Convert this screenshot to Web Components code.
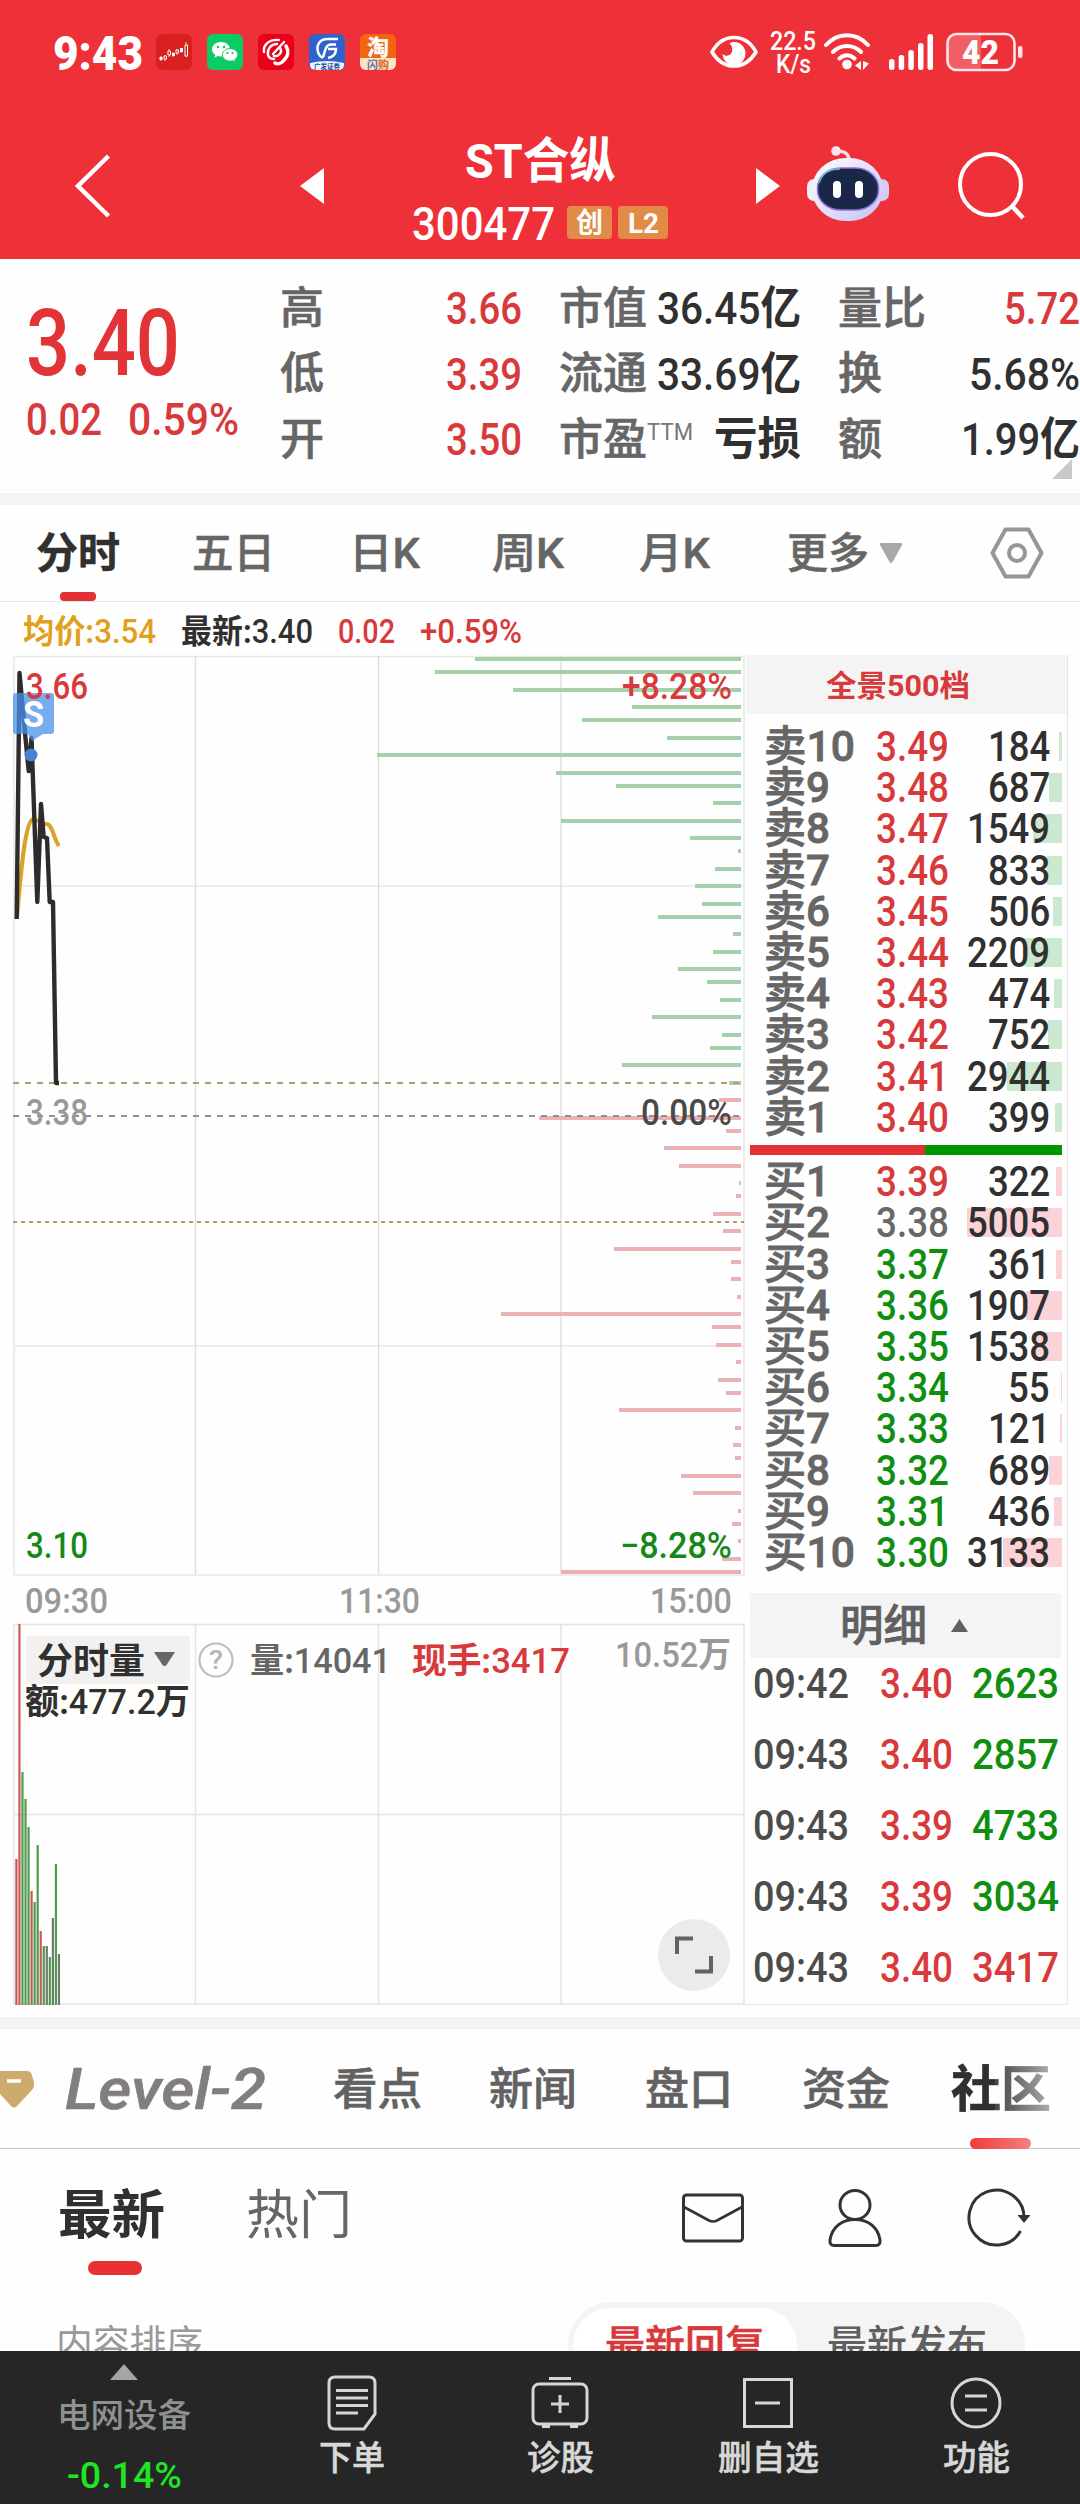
<!DOCTYPE html>
<html lang="zh-CN">
<head>
<meta charset="utf-8">
<meta name="viewport" content="width=1080">
<title>ST合纵 300477</title>
<style>
  html, body { margin: 0; padding: 0; background: #fefefe; }
  body {
    width: 1080px;
    height: 2504px;
    overflow: hidden;
    font-family: Roboto, "Noto Sans CJK SC", sans-serif;
    font-weight: 500;
    color: #323232;
  }
</style>
</head>
<body>
<stock-app></stock-app>

<script>
const RED = '#d8393b';
const GREEN = '#0f8f10';

/**
 * <fit-text w="74"> - condensed text squeezed to a given width
 * Without w it falls back to the default condensed ratio.
 */
class FitText extends HTMLElement {
  constructor() {
    super();
    this.attachShadow({ mode: 'open' });
    this.shadowRoot.innerHTML = `
      <style>
        :host { display: block; height: 1em; line-height: 1; white-space: nowrap; flex-shrink: 0; }
        span { display: inline-block; transform-origin: 0 50%; }
      </style>
      <span><slot></slot></span>
    `;
  }

  connectedCallback() {
    const span = this.shadowRoot.querySelector('span');
    const natural = span.getBoundingClientRect().width;
    const width = parseFloat(this.getAttribute('w')) || natural * 0.87;
    this.style.width = width + 'px';
    if (natural) span.style.transform = `translateY(1.2px) scaleX(${width / natural})`;
  }
}

/**
 * <ui-icon name="search"> - inline svg icons
 */
const ICONS = {
  candles: [36, 36, `<rect width="36" height="36" rx="6" fill="#d8201f"/>
    <path d="M5 22v5M9 21v6M13 15v8M17 18v5M21 15v6M25 14v5M30 8v15" stroke="#fff" stroke-width="1" opacity=".8"/>
    <path d="M3.500 23h3v3h-3zM16 19h3v3h-3zM24 14h3v4h-3z" fill="#fff"/>
    <path d="M8 22h2.500v3h-2.500zM12 17h2.500v4h-2.500zM20 16h2.500v3h-2.500zM29 11h2.500v11h-2.500z" fill="#d31f22" stroke="#fff" stroke-width="1"/>`],
  wechat: [36, 36, `<rect width="36" height="36" rx="6" fill="#0ccb64"/>
    <path d="M14 8c-5 0-9 3.200-9 7.300 0 2.300 1.300 4.200 3.300 5.500l-.9 3 3.300-1.700c1 .3 2 .4 3.300.4 5 0 9-3.100 9-7.200S19 8 14 8z" fill="#fff"/>
    <path d="M23 14.500c-4.300 0-7.600 2.800-7.600 6.300s3.300 6.300 7.600 6.300c1 0 2-.2 2.800-.4l2.800 1.400-.8-2.500c1.800-1.200 3-2.900 3-4.800 0-3.500-3.500-6.300-7.800-6.300z" fill="#fff" stroke="#0ccb64" stroke-width="1"/>
    <g fill="#0ccb64"><circle cx="11" cy="13" r="1.300"/><circle cx="17" cy="13" r="1.300"/><circle cx="20.500" cy="19" r="1.100"/><circle cx="25.500" cy="19" r="1.100"/></g>`],
  broker: [36, 36, `<rect width="36" height="36" rx="6" fill="#ea0018"/>
    <g fill="none" stroke="#fff" stroke-width="2.400" stroke-linecap="round">
    <path d="M21 6C11 5 5 11 6 18M19 10c-6 0-10 5-9 11 1 3 3 4 6 4"/>
    <path d="M28 12c3 5 2 10-1 13-3 4-7 6-10 4" stroke-width="3.500"/>
    <path d="M26 8 15 20M22 14c3 4-1 9-6 8"/></g>`],
  gf: [36, 36, `<rect width="36" height="36" rx="6" fill="#2e62cc"/>
    <path d="M1 29q17-4 34 0v2a5 5 0 0 1-5 5H6a5 5 0 0 1-5-5z" fill="#eef3fc"/>
    <g fill="none" stroke="#fff" stroke-width="2.500"><path d="M29 5H20C11 4 7 11 9 18c1 4 3 5 5 6"/><path d="M27 10.500h-5c-5 0-6 6-8 13"/><path d="M19 15h8c0 5-3 8-8 9"/></g>
    <text x="18" y="34.500" font-size="6.500" font-weight="700" text-anchor="middle" textLength="26" fill="#2b4c9c">广发证券</text>`],
  taobao: [36, 36, `<rect width="36" height="36" rx="6" fill="#f3660f"/>
    <path d="M0 24h36v6a6 6 0 0 1-6 6H6a6 6 0 0 1-6-6z" fill="#fde3c8"/>
    <text x="18" y="21" font-size="22" font-weight="900" text-anchor="middle" fill="#fff">淘</text>
    <text x="18" y="34.500" font-size="11" font-weight="700" text-anchor="middle" fill="#d8672b"><tspan fill="#6d6f9c">闪</tspan>购</text>`],
  eye: [48, 34, `<path d="M2 17C8 6 16 2.500 24 2.500S40 6 46 17c-6 10-14 14-22 14S8 27 2 17z" fill="none" stroke="#fff" stroke-width="3.600"/>
    <path d="M24 7a11.500 11.500 0 1 1-11.500 12c3 3 7 2 9-1 2-4 0-8-2-9.500C21 7.500 22 7 24 7z" fill="#fff"/>`],
  wifi: [48, 38, `<g fill="none" stroke="#fff" stroke-width="4" stroke-linecap="round">
    <path d="M2 12C14-1 32-1 44 12M9 19c8-8 20-8 28 0M15.500 25.500c4.500-4.500 10.500-4.500 15 0"/></g>
    <circle cx="23" cy="31.500" r="4.800" fill="#fff"/><path d="M37 28v9l-6-4.500zM39 28v9l6-6.500z" fill="#fff"/>`],
  signal: [46, 36, `<g fill="#fff"><rect y="25" width="5.500" height="11" rx="2.500"/><rect x="9.700" y="21" width="5.500" height="15" rx="2.500"/><rect x="19.300" y="16" width="5.500" height="20" rx="2.500"/><rect x="29" y="9" width="5.500" height="27" rx="2.500"/><rect x="38.500" width="5.500" height="36" rx="2.500"/></g>`],
  battery: [78, 40, `<path d="M11 1.500h24v37H11a9 9 0 0 1-9-9v-19a9 9 0 0 1 9-9z" fill="#fff" opacity=".22"/>
    <rect x="1.500" y="2" width="67" height="36" rx="9" fill="none" stroke="#ffe6e6" stroke-width="2.600"/>
    <rect x="72" y="14" width="4.500" height="12" rx="2" fill="#ffe6e6"/>
    <text x="34.500" y="31.500" font-size="33" font-weight="900" text-anchor="middle" textLength="37" lengthAdjust="spacingAndGlyphs" fill="#fff">42</text>`],
  back: [38, 66, `<path d="M34.500 3 4 33l30.500 30" fill="none" stroke="#fff" stroke-width="4.500"/>`],
  left: [24, 36, `<path d="M24 0v36L0 18z" fill="#fff"/>`],
  right: [24, 36, `<path d="M0 0v36l24-18z" fill="#fff"/>`],
  robot: [82, 76, `<defs><linearGradient id="h" x1="0" y1="0" x2="1" y2="1"><stop offset="0" stop-color="#fff"/><stop offset=".5" stop-color="#e2e1fa"/><stop offset="1" stop-color="#c3c0f2"/></linearGradient></defs>
    <path d="M29 5.500c8-1 13 2 13 9" fill="none" stroke="#f3d9e2" stroke-width="3.500"/><circle cx="29" cy="5" r="4.800" fill="#f8e8ee"/>
    <rect x="0" y="33" width="16" height="22" rx="7" fill="#f0ecfa"/><rect x="66" y="33" width="16" height="22" rx="7" fill="#d5cdf5"/>
    <rect x="5" y="12" width="71" height="63" rx="34" ry="31" fill="url(#h)"/>
    <rect x="10.500" y="22" width="61" height="42" rx="23" ry="20" fill="#1b2749" stroke="#8a72dd" stroke-width="1.500"/>
    <path d="M12 37C15 27 22 23 33 23" fill="none" stroke="#65bdd4" stroke-width="1.500"/>
    <rect x="26" y="35" width="8" height="17" rx="4" fill="#fff"/><rect x="48" y="35" width="8" height="17" rx="4" fill="#fff"/>`],
  search: [68, 68, `<circle cx="32.500" cy="32.500" r="30.500" fill="none" stroke="#fff" stroke-width="4"/><path d="M53.500 53.500 65 66" stroke="#fff" stroke-width="4.500"/>`],
  hexagon: [54, 52, `<path d="M15.500 2.500h23L51.500 26 38.500 49.500h-23L2.500 26z" fill="none" stroke="#969696" stroke-width="4" stroke-linejoin="round"/><circle cx="27" cy="26" r="8" fill="none" stroke="#969696" stroke-width="4"/>`],
  diamond: [34, 38, `<path d="M0 1h27q3 0 4.500 3L34 12q1 4-2 8L17 36q-3 3-6 0L0 24z" fill="#cdab6d"/><path d="M7 11h14" stroke="#fff" stroke-width="3.500"/>`],
  mail: [62, 50, `<rect x="1.500" y="2" width="59" height="46" rx="3" fill="none" stroke="#333" stroke-width="3"/><path d="M2 14 27 27.500q4 2 8 0L60 14" fill="none" stroke="#333" stroke-width="2.600"/>`],
  user: [54, 58, `<g fill="none" stroke="#333" stroke-width="3"><ellipse cx="27" cy="16" rx="15" ry="14.500"/><path d="M27 30.500C14 30.500 4 38 2 51q-.5 5.500 4 5.500h42q4.500 0 4-5.500C50 38 40 30.500 27 30.500z"/></g>`],
  refresh: [64, 60, `<path d="M53.500 43A27.500 27.500 0 1 1 57 30" fill="none" stroke="#333" stroke-width="3"/><path d="M50.500 27h13L57 35z" fill="#333"/>`],
  order: [50, 56, `<path d="M8 2h34q6 0 6 6v31L37 54H8q-6 0-6-6V8q0-6 6-6z" fill="none" stroke="#d6d6d6" stroke-width="3"/><path d="M9 15.500h32M9 23h32M9 30.500h32M9 38h22" stroke="#d6d6d6" stroke-width="2.800"/>`],
  diagnose: [58, 54, `<path d="M18 2.500h22" stroke="#d6d6d6" stroke-width="3"/><rect x="2" y="8" width="54" height="40" rx="6" fill="none" stroke="#d6d6d6" stroke-width="3"/><path d="M29 19v18M20 28h18" stroke="#d6d6d6" stroke-width="3"/><path d="M11 50h8M39 50h8" stroke="#d6d6d6" stroke-width="4"/>`],
  remove: [50, 50, `<rect x="1.500" y="1.500" width="47" height="47" fill="none" stroke="#d6d6d6" stroke-width="3"/><path d="M12 25h25" stroke="#d6d6d6" stroke-width="3"/>`],
  func: [52, 52, `<circle cx="26" cy="26" r="24" fill="none" stroke="#d6d6d6" stroke-width="3"/><path d="M15 19h22M15 33h22" stroke="#d6d6d6" stroke-width="3"/>`],
  down: [24, 20, `<path d="M2 0h20q2 0 1 2L13.500 19q-1.500 2-3 0L1 2Q0 0 2 0z" fill="#a8a8a8"/>`],
  up: [17, 13, `<path d="M0 13h17L8.500 0z" fill="#606060"/>`],
  upLight: [28, 16, `<path d="M0 16h28L14 0z" fill="#a6a6a6"/>`],
  corner: [20, 20, `<path d="M20 0v20H0z" fill="#c9c9c9"/>`]
};

class UiIcon extends HTMLElement {
  constructor() {
    super();
    this.attachShadow({ mode: 'open' });
  }

  connectedCallback() {
    const [w, h, body] = ICONS[this.getAttribute('name')];
    this.shadowRoot.innerHTML = `
      <style>
        :host { display: block; flex-shrink: 0; }
        svg { display: block; }
      </style>
      <svg width="${w}" height="${h}" viewBox="0 0 ${w} ${h}">${body}</svg>
    `;
  }
}

/**
 * <app-header> - status bar and title bar
 */
class AppHeader extends HTMLElement {
  constructor() {
    super();
    this.attachShadow({ mode: 'open' });
  }

  connectedCallback() {
    this.shadowRoot.innerHTML = `
      <style>
        :host { display: block; height: 259px; background: #ee3138; color: #fff; }
        .status { display: flex; align-items: center; height: 104px; padding: 0 56px 0 53px; box-sizing: border-box; }
        .time { font-size: 49px; font-weight: 900; margin-right: 13px; }
        .apps { display: flex; gap: 15px; flex: 1; }
        .speed { font-size: 25px; display: flex; flex-direction: column; align-items: center; margin: -3px 8px 0 12px; }
        .speed fit-text { height: 23px; }
        .nav { display: flex; align-items: center; height: 155px; padding: 8px 55px 0 74px; box-sizing: border-box; }
        .title { width: 256px; display: flex; flex-direction: column; align-items: center; margin: 10px 88px 0; }
        .name { font-size: 49px; font-weight: 700; }
        .code { display: flex; align-items: center; font-size: 46px; margin-top: 15px; }
        .badge {
          display: flex; align-items: center; justify-content: center;
          height: 33px; width: 45px; border-radius: 4px;
          background: #e08c47; font-size: 28px; font-weight: 700; margin-left: 12px;
        }
        .badge + .badge { width: 50px; margin-left: 6px; }
      </style>
      <div class="status">
        <fit-text class="time" w="90">9:43</fit-text>
        <div class="apps">
          <ui-icon name="candles"></ui-icon><ui-icon name="wechat"></ui-icon><ui-icon name="broker"></ui-icon>
          <ui-icon name="gf"></ui-icon><ui-icon name="taobao"></ui-icon>
        </div>
        <ui-icon name="eye"></ui-icon>
        <div class="speed"><fit-text w="46">22.5</fit-text><fit-text w="35">K/s</fit-text></div>
        <ui-icon name="wifi"></ui-icon>
        <ui-icon name="signal" style="margin:0 11px 0 17px"></ui-icon>
        <ui-icon name="battery"></ui-icon>
      </div>
      <div class="nav">
        <ui-icon name="back"></ui-icon>
        <ui-icon name="left" style="margin-left:188px"></ui-icon>
        <div class="title">
          <fit-text class="name" w="151">ST合纵</fit-text>
          <div class="code">
            <fit-text w="143">300477</fit-text>
            <span class="badge"><fit-text w="27">创</fit-text></span>
            <span class="badge"><fit-text w="31">L2</fit-text></span>
          </div>
        </div>
        <ui-icon name="right"></ui-icon>
        <ui-icon name="robot" style="margin:-3px 0 0 27px"></ui-icon>
        <ui-icon name="search" style="margin-left:69px"></ui-icon>
      </div>
    `;
  }
}

/**
 * <quote-summary> - last price and key figures
 */
class QuoteSummary extends HTMLElement {
  constructor() {
    super();
    this.attachShadow({ mode: 'open' });
  }

  connectedCallback() {
    const cells = [
      ['高', '3.66', 44, 76, 'r'], ['市值', '36.45<b>亿</b>', 88, 144, ''], ['量比', '5.72', 88, 76, 'r'],
      ['低', '3.39', 44, 76, 'r'], ['流通', '33.69<b>亿</b>', 88, 144, ''], ['换', '5.68%', 44, 111, ''],
      ['开', '3.50', 44, 76, 'r'], ['市盈', '<b>亏损</b>', 88, 87, ''], ['额', '1.99<b>亿</b>', 44, 119, '']
    ];
    this.shadowRoot.innerHTML = `
      <style>
        :host { display: flex; height: 234px; border-bottom: 12px solid #f4f4f4; color: ${RED}; position: relative; }
        .price { width: 280px; flex-shrink: 0; padding: 38px 0 0 26px; box-sizing: border-box; }
        .last { font-size: 92px; color: #e23336; }
        .change { display: flex; gap: 26px; font-size: 45px; margin-top: 7px; }
        .grid {
          display: grid;
          grid-template-columns: 242px 242px 242px;
          column-gap: 37px;
          grid-auto-rows: 65.500px;
          padding-top: 16px;
        }
        b { font-weight: 700; }
        .cell { display: flex; align-items: center; font-size: 45px; }
        .cell fit-text:last-child { margin-left: auto; color: #303030; }
        .cell fit-text.r:last-child { color: ${RED}; }
        .label { font-size: 44px; color: #666; -webkit-text-stroke: .6px #666; }
        .sup { font-size: 23px; color: #777; font-weight: 400; margin: -14px 0 0 0; }
        ui-icon { position: absolute; right: 8px; bottom: 14px; }
      </style>
      <div class="price">
        <fit-text class="last" w="154">3.40</fit-text>
        <div class="change"><fit-text w="76">0.02</fit-text><fit-text w="111">0.59%</fit-text></div>
      </div>
      <div class="grid">
        ${cells.map(([k, v, kw, vw, c]) => `
          <div class="cell">
            <fit-text class="label" w="${kw}">${k}</fit-text>
            ${k === '市盈' ? '<fit-text class="sup" w="46">TTM</fit-text>' : ''}
            <fit-text class="${c}" w="${vw}">${v}</fit-text>
          </div>`).join('')}
      </div>
      <ui-icon name="corner"></ui-icon>
    `;
  }
}

/**
 * <period-tabs> - chart period switch and the averages line below
 */
class PeriodTabs extends HTMLElement {
  constructor() {
    super();
    this.attachShadow({ mode: 'open' });
  }

  connectedCallback() {
    this.shadowRoot.innerHTML = `
      <style>
        :host { display: block; }
        .tabs {
          display: flex; align-items: center; height: 96px; padding-left: 36px;
          border-bottom: 1px solid #e4e4e4; font-size: 42px; color: #666; -webkit-text-stroke: .5px;
        }
        .active { color: #303030; font-weight: 700; position: relative; }
        .active::after {
          content: ""; position: absolute; left: 24px; top: 60px;
          width: 36px; height: 9px; border-radius: 4px; background: #e33035;
        }
        .info { display: flex; align-items: center; height: 53px; padding: 3px 0 0 23px; box-sizing: border-box; font-size: 33px; color: ${RED}; }
        b { font-weight: 700; }
      </style>
      <div class="tabs">
        <fit-text class="active" w="84">分时</fit-text>
        <fit-text w="83" style="margin-left:72px">五日</fit-text>
        <fit-text w="71" style="margin-left:74px">日K</fit-text>
        <fit-text w="72" style="margin-left:72px">周K</fit-text>
        <fit-text w="71" style="margin-left:75px">月K</fit-text>
        <fit-text w="82" style="margin-left:77px">更多</fit-text>
        <ui-icon name="down" style="margin-left:10px"></ui-icon>
        <ui-icon name="hexagon" style="margin-left:87px"></ui-icon>
      </div>
      <div class="info">
        <fit-text w="133" style="color:#dfa01c"><b>均价:</b>3.54</fit-text>
        <fit-text w="132" style="color:#303030;margin-left:25px"><b>最新:</b>3.40</fit-text>
        <fit-text w="57" style="margin-left:25px">0.02</fit-text>
        <fit-text w="102" style="margin-left:25px">+0.59%</fit-text>
      </div>
    `;
  }
}

// Resting orders: [y, left edge]; every bar runs to the right edge at 741
const ASKS = [
  [659, 475], [672, 435], [690, 513], [707, 632], [720, 582], [738, 667], [755, 377], [773, 556], [786, 616],
  [803, 713], [821, 561], [838, 690], [851, 738], [869, 715], [886, 695], [904, 702], [917, 658], [934, 733],
  [952, 713], [969, 678], [982, 707], [1000, 720], [1017, 652], [1035, 722], [1048, 710], [1065, 622], [1083, 729]
];
const BIDS = [
  [1100, 719], [1118, 539], [1131, 726], [1148, 664], [1166, 679], [1183, 739], [1196, 736], [1214, 713],
  [1231, 723], [1249, 614], [1262, 731], [1279, 731], [1297, 737], [1314, 501], [1327, 712], [1345, 716],
  [1362, 736], [1380, 718], [1393, 726], [1410, 619], [1428, 735], [1445, 733], [1458, 735], [1476, 681],
  [1493, 693], [1511, 738], [1524, 732], [1541, 738], [1559, 722], [1572, 561]
];

const label = (x, y, w, size, fill, text, weight = 500) =>
  `<text x="${x}" y="${y}" textLength="${w}" lengthAdjust="spacingAndGlyphs" font-size="${size}" font-weight="${weight}" fill="${fill}">${text}</text>`;

/**
 * <minute-chart> - intraday price line with order depth
 */
class MinuteChart extends HTMLElement {
  constructor() {
    super();
    this.attachShadow({ mode: 'open' });
  }

  connectedCallback() {
    const bar = ([y, x], fill) => `<rect x="${x}" y="${y - 2}" width="${741 - x}" height="4" fill="${fill}"/>`;
    this.shadowRoot.innerHTML = `
      <style>
        :host { display: block; height: 968px; }
        svg { display: block; }
      </style>
      <svg width="746" height="968" viewBox="0 655 746 968">
        <g fill="none" stroke="#e8e8e8" stroke-width="1.600">
          <path d="M14 656.500H744V1575H14zM14 886H743M14 1346H743"/>
          <path d="M195.500 656V1575M378.500 656V1575M561 656V1575" stroke="#dcdcdc" stroke-width="1.300"/>
        </g>
        ${ASKS.map(b => bar(b, '#a6d0a9')).join('')}
        ${BIDS.map(b => bar(b, '#ebb2b5')).join('')}
        <g fill="none" stroke-width="2">
          <path d="M13 1083H741" stroke="#b3a06c" stroke-dasharray="6 6"/>
          <path d="M13 1116H741" stroke="#929292" stroke-dasharray="6 6"/>
          <path d="M13 1222H744" stroke="#b89b60" stroke-dasharray="4 4"/>
        </g>
        <path d="M17 918C20 885 24 822 33 819C38 819 40 824 46 824C53 824 53 838 59 846" fill="none" stroke="#dba228" stroke-width="4"/>
        <path d="M16.700 919 19.500 673 25 733 28.700 771 31.500 738 37.300 902 41 804 43.700 837 47 838 49.700 902 53 902 56 1083 59 1083" fill="none" stroke="#2e2b2c" stroke-width="4.400" stroke-linejoin="round"/>
        <path d="M16 693H51q3 0 3 3V731q0 3-3 3H43L32 741 28 734H16q-3 0-3-3V696q0-3 3-3z" fill="#4a90ea" opacity=".75"/>
        <circle cx="31" cy="755" r="6.500" fill="#4582d2"/>
        ${label(23, 726.500, 21, 36, '#fff', 'S', 700)}
        ${label(26, 699, 62, 36, RED, '3.66')}
        ${label(622, 699, 110, 36, RED, '+8.28%')}
        ${label(26, 1124.500, 62, 36, '#999', '3.38')}
        ${label(641, 1124.500, 91, 36, '#4c4848', '0.00%')}
        ${label(26, 1558, 62, 36, '#15881a', '3.10')}
        ${label(620, 1558, 112, 36, '#15881a', '−8.28%')}
        ${label(25, 1613, 83, 35, '#999', '09:30')}
        ${label(339, 1613, 81, 35, '#999', '11:30')}
        ${label(650, 1613, 82, 35, '#999', '15:00')}
      </svg>
    `;
  }
}

/**
 * <volume-chart> - per minute volume
 */
class VolumeChart extends HTMLElement {
  constructor() {
    super();
    this.attachShadow({ mode: 'open' });
  }

  connectedCallback() {
    const r = '#c95a55', g = '#4f9a4c', d = '#6d7a6e';
    const bars = [
      [1859, r], [1624, r], [1772, g], [1799, g], [1827, g], [1891, r], [1902, g], [1845, g],
      [1931, r], [1946, g], [1946, d], [1957, g], [1918, d], [1864, g], [1954, d]
    ];
    this.shadowRoot.innerHTML = `
      <style>
        :host { display: block; height: 394px; }
        svg { display: block; }
      </style>
      <svg width="746" height="394" viewBox="0 1623 746 394">
        <g fill="none" stroke="#e4e4e4" stroke-width="1.500">
          <path d="M14 1624.500H744V2004H14zM14 1814.500H744"/>
          <path d="M195.500 1624V2004M378.500 1624V2004M561 1624V2004"/>
        </g>
        ${bars.map(([y, c], i) => `<rect x="${15.300 + i * 3.040}" y="${y}" width="2.200" height="${2005 - y}" fill="${c}"/>`).join('')}
        <rect x="26" y="1636" width="164" height="48" rx="4" fill="#f2f1f0"/>
        <rect x="26" y="1684" width="164" height="34" fill="#fffefa"/>
        ${label(37, 1674, 108, 36, '#303030', '分时量', 700)}
        <path d="M154 1652h21l-8.500 13q-2 2-4 0z" fill="#666"/>
        <circle cx="216" cy="1660" r="16.500" fill="none" stroke="#bdbdbd" stroke-width="2.200"/>
        ${label(209, 1669, 14, 25, '#b5b5b5', '?')}
        ${label(250, 1673, 141, 35, '#666', '<tspan font-weight="700">量:</tspan>14041')}
        ${label(412, 1673, 158, 35, RED, '<tspan font-weight="700">现手:</tspan>3417')}
        ${label(615, 1667, 116, 35, '#999', '10.52<tspan font-weight="700">万</tspan>')}
        ${label(25, 1714, 165, 35, '#303030', '<tspan font-weight="700">额:</tspan>477.2<tspan font-weight="700">万</tspan>')}
        <circle cx="694" cy="1955" r="36" fill="#ebebeb"/>
        <path d="M677 1954V1938.500H693M711 1956V1971.500H695" fill="none" stroke="#636363" stroke-width="4"/>
      </svg>
    `;
  }
}

/**
 * <order-book> - ten levels each side and latest trades
 */
class OrderBook extends HTMLElement {
  constructor() {
    super();
    this.attachShadow({ mode: 'open' });
  }

  connectedCallback() {
    const asks = [
      [10, '3.49', 184, 3], [9, '3.48', 687, 13], [8, '3.47', 1549, 29], [7, '3.46', 833, 15], [6, '3.45', 506, 9],
      [5, '3.44', 2209, 37], [4, '3.43', 474, 8], [3, '3.42', 752, 14], [2, '3.41', 2944, 55], [1, '3.40', 399, 7]
    ];
    const bids = [
      [1, '3.39', 322, 6], [2, '3.38', 5005, 95], [3, '3.37', 361, 6], [4, '3.36', 1907, 36], [5, '3.35', 1538, 28],
      [6, '3.34', 55, 1], [7, '3.33', 121, 2], [8, '3.32', 689, 13], [9, '3.31', 436, 8], [10, '3.30', 3133, 59]
    ];
    const trades = [
      ['09:42', '3.40', 2623, GREEN], ['09:43', '3.40', 2857, GREEN], ['09:43', '3.39', 4733, GREEN],
      ['09:43', '3.39', 3034, GREEN], ['09:43', '3.40', 3417, RED]
    ];
    const color = p => p > 3.38 ? RED : p < 3.38 ? GREEN : '#686868';
    const row = (side, bar) => ([n, p, q, w]) => `
      <div class="row" style="--bar:${w}px;--fill:${bar}">
        <fit-text class="lv" w="${n === 10 ? 91 : 66}">${side}${n}</fit-text>
        <fit-text w="73" style="color:${color(+p)}">${p}</fit-text>
        <fit-text class="qty">${q}</fit-text>
      </div>`;
    this.shadowRoot.innerHTML = `
      <style>
        :host { display: block; width: 321px; height: 1349px; border-right: 1px solid #e6e6e6; border-bottom: 1px solid #e6e6e6; font-size: 42px; }
        .head { display: flex; align-items: center; justify-content: center; height: 59px; background: #f4f4f4; font-size: 30px; color: ${RED}; padding-right: 18px; font-weight: 700; }
        .side { padding-top: 11px; }
        .row {
          display: grid; grid-template-columns: 112px 73px 1fr; align-items: center;
          height: 41.200px; margin-right: 5px; padding: 0 12px 0 18px;
          background: linear-gradient(var(--fill), var(--fill)) no-repeat right 7px / var(--bar) 29px;
        }
        .lv { color: #666; -webkit-text-stroke: .8px #666; }
        .qty { justify-self: end; color: #303030; }
        .ratio { display: flex; height: 10.500px; margin: 8px 5px 0 4px; background: #009600; }
        .ratio i { width: 175px; background: #e33035; }
        .buy { padding-top: 4.900px; }
        .detail { display: flex; align-items: center; height: 65px; margin: 20.600px 6px 0 4px; background: #f4f4f4; color: #606060; -webkit-text-stroke: .7px; font-size: 43px; padding-left: 90px; box-sizing: border-box; }
        .detail ui-icon { margin: 0 0 0 24px; }
        .trade { display: grid; grid-template-columns: 127px 73px 1fr; align-items: center; height: 50px; margin-bottom: 21px; padding: 0 8px 0 7px; }
      </style>
      <div class="head"><fit-text w="144">全景500档</fit-text></div>
      <div class="side">${asks.map(row('卖', '#cce9cf')).join('')}</div>
      <div class="ratio"><i></i></div>
      <div class="side buy">${bids.map(row('买', '#fad2d7')).join('')}</div>
      <div class="detail"><fit-text w="87">明细</fit-text><ui-icon name="up"></ui-icon></div>
      ${trades.map(([t, p, q, c]) => `
        <div class="trade">
          <fit-text w="96" style="color:#4c4c4c">${t}</fit-text>
          <fit-text w="73" style="color:${RED}">${p}</fit-text>
          <fit-text w="87" style="color:${c};justify-self:end">${q}</fit-text>
        </div>`).join('')}
    `;
  }
}

/**
 * <community-panel> - section tabs and post list filters
 */
class CommunityPanel extends HTMLElement {
  constructor() {
    super();
    this.attachShadow({ mode: 'open' });
  }

  connectedCallback() {
    this.shadowRoot.innerHTML = `
      <style>
        :host { display: block; box-sizing: border-box; height: 334px; border-top: 12px solid #f4f4f4; overflow: hidden; }
        .tabs { display: flex; align-items: center; height: 120px; border-bottom: 1.500px solid #c6c6c6; box-sizing: border-box; font-size: 44px; color: #626262; -webkit-text-stroke: .6px; }
        .level { font-size: 57px; font-style: italic; font-weight: 500; color: #817e7d; }
        .on { position: relative; font-size: 50px; font-weight: 700; color: #303030; }
        .on::before {
          content: ""; position: absolute; z-index: 1; left: 44px; top: -6px; width: 62px; height: 62px;
          background: linear-gradient(90deg, rgba(255,255,255,.1), rgba(255,255,255,.65));
        }
        .on::after {
          content: ""; position: absolute; left: 19px; top: 74px; width: 61px; height: 11px; border-radius: 5.500px;
          background: linear-gradient(90deg, #ee3b3a, #f4817f);
        }
        .sub { display: flex; align-items: center; height: 131px; padding: 0 49px 0 58px; font-size: 53px; color: #666; box-sizing: border-box; }
        .sub fit-text { margin-top: 2px; }
        .sub ui-icon { margin-top: 6px; }
        .sub .new { color: #303030; font-weight: 700; position: relative; }
        .new::after { content: ""; position: absolute; left: 30px; top: 72px; width: 54px; height: 14px; border-radius: 7px; background: #e83033; }
        .filter { display: flex; padding: 21.500px 55px 0 56px; justify-content: space-between; color: #999; font-size: 37px; }
        .sort { margin-top: 23px; font-weight: 400; }
        .pill { display: flex; align-items: center; width: 457px; height: 86px; border-radius: 43px; background: #f4f4f4; font-size: 40px; color: #606060; padding: 0 0 0 5px; box-sizing: border-box; }
        .pill .sel { display: flex; align-items: center; justify-content: center; width: 224px; height: 74px; border-radius: 37px; background: #fff; color: ${RED}; margin-right: 30px; -webkit-text-stroke: .5px; }
        .pill fit-text { margin-top: 1px; }
      </style>
      <div class="tabs">
        <ui-icon name="diamond"></ui-icon>
        <fit-text class="level" w="201" style="margin-left:31px">Level-2</fit-text>
        <fit-text w="89" style="margin-left:67px">看点</fit-text>
        <fit-text w="88" style="margin-left:67px">新闻</fit-text>
        <fit-text w="88" style="margin-left:68px">盘口</fit-text>
        <fit-text w="88" style="margin-left:69px">资金</fit-text>
        <fit-text class="on" w="100" style="margin-left:61px">社区</fit-text>
      </div>
      <div class="sub">
        <fit-text class="new" w="107">最新</fit-text>
        <fit-text w="106" style="margin-left:81px;font-weight:400">热门</fit-text>
        <ui-icon name="mail" style="margin-left:auto"></ui-icon>
        <ui-icon name="user" style="margin-left:84px"></ui-icon>
        <ui-icon name="refresh" style="margin-left:85px"></ui-icon>
      </div>
      <div class="filter">
        <fit-text class="sort" w="147">内容排序</fit-text>
        <div class="pill">
          <span class="sel"><fit-text w="160">最新回复</fit-text></span>
          <fit-text w="160">最新发布</fit-text>
        </div>
      </div>
    `;
  }
}

/**
 * <bottom-bar> - sector ticker and actions
 */
class BottomBar extends HTMLElement {
  constructor() {
    super();
    this.attachShadow({ mode: 'open' });
  }

  connectedCallback() {
    const items = [['order', '下单', 66], ['diagnose', '诊股', 67], ['remove', '删自选', 101], ['func', '功能', 67]];
    this.shadowRoot.innerHTML = `
      <style>
        :host { display: grid; grid-template-columns: 248px repeat(4, 208px); height: 153px; background: #262626; color: #d8d8d8; font-size: 34px; }
        div { display: flex; flex-direction: column; align-items: center; -webkit-text-stroke: .5px; }
        .sector { color: #8e9190; font-size: 33px; padding-top: 13px; -webkit-text-stroke: 0; }
        .sector fit-text { margin-top: 18px; }
        .sector .down { color: #1fe524; font-size: 37px; margin-top: 25px; }
        .icon { height: 60px; display: flex; align-items: center; justify-content: center; margin: 22px 0 7px; }
      </style>
      <div class="sector">
        <ui-icon name="upLight"></ui-icon>
        <fit-text w="134">电网设备</fit-text>
        <fit-text class="down" w="115">-0.14%</fit-text>
      </div>
      ${items.map(([icon, text, w]) => `
        <div><span class="icon"><ui-icon name="${icon}"></ui-icon></span><fit-text w="${w}">${text}</fit-text></div>`).join('')}
    `;
  }
}

class StockApp extends HTMLElement {
  constructor() {
    super();
    this.attachShadow({ mode: 'open' });
  }

  connectedCallback() {
    this.shadowRoot.innerHTML = `
      <style>
        :host { display: flex; flex-direction: column; width: 1080px; height: 2504px; overflow: hidden; }
        .market { display: flex; height: 1362px; }
        .charts { width: 746px; }
        .market, app-header, quote-summary, period-tabs, community-panel, bottom-bar { flex-shrink: 0; }
      </style>
      <app-header></app-header>
      <quote-summary></quote-summary>
      <period-tabs></period-tabs>
      <div class="market">
        <div class="charts"><minute-chart></minute-chart><volume-chart></volume-chart></div>
        <order-book></order-book>
      </div>
      <community-panel></community-panel>
      <bottom-bar></bottom-bar>
    `;
  }
}

customElements.define('fit-text', FitText);
customElements.define('ui-icon', UiIcon);
customElements.define('app-header', AppHeader);
customElements.define('quote-summary', QuoteSummary);
customElements.define('period-tabs', PeriodTabs);
customElements.define('minute-chart', MinuteChart);
customElements.define('volume-chart', VolumeChart);
customElements.define('order-book', OrderBook);
customElements.define('community-panel', CommunityPanel);
customElements.define('bottom-bar', BottomBar);
customElements.define('stock-app', StockApp);
</script>
</body>
</html>
